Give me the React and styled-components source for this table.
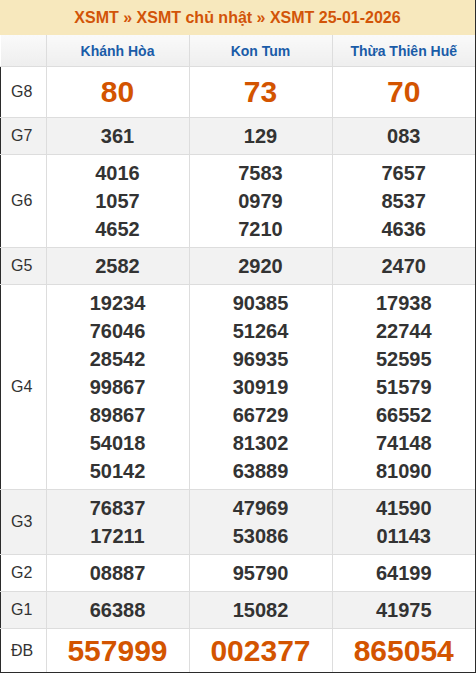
import React from "react";
import styled, { createGlobalStyle } from "styled-components";

const GlobalStyle = createGlobalStyle`
  html, body {
    margin: 0;
    padding: 0;
    background: #fff;
  }
  body {
    font-family: "Liberation Sans", Arial, sans-serif;
    color: #333;
  }
`;

const provinces = ["Khánh Hòa", "Kon Tum", "Thừa Thiên Huế"];

// prize rows, one array per province
const rows = [
  { label: "G8", big: true, values: [["80"], ["73"], ["70"]] },
  { label: "G7", values: [["361"], ["129"], ["083"]] },
  {
    label: "G6",
    values: [
      ["4016", "1057", "4652"],
      ["7583", "0979", "7210"],
      ["7657", "8537", "4636"],
    ],
  },
  { label: "G5", values: [["2582"], ["2920"], ["2470"]] },
  {
    label: "G4",
    values: [
      ["19234", "76046", "28542", "99867", "89867", "54018", "50142"],
      ["90385", "51264", "96935", "30919", "66729", "81302", "63889"],
      ["17938", "22744", "52595", "51579", "66552", "74148", "81090"],
    ],
  },
  {
    label: "G3",
    values: [
      ["76837", "17211"],
      ["47969", "53086"],
      ["41590", "01143"],
    ],
  },
  { label: "G2", values: [["08887"], ["95790"], ["64199"]] },
  { label: "G1", values: [["66388"], ["15082"], ["41975"]] },
  { label: "ĐB", big: true, special: true, values: [["557999"], ["002377"], ["865054"]] },
];

const Wrapper = styled.div`
  width: 476px;
  height: 673px;
  box-sizing: border-box;
  border-right: 1px solid #2b2b2b;
  border-bottom: 1px solid #2b2b2b;
  overflow: hidden;
`;

const Title = styled.div`
  height: 35px;
  display: flex;
  align-items: center;
  justify-content: center;
  background: #f7e8bd;
  color: #d25408;
  font-size: 16px;
  font-weight: bold;
`;

const Table = styled.table`
  width: 100%;
  border-collapse: collapse;
  table-layout: fixed;
`;

const HeadCell = styled.th`
  height: 31px;
  padding: 0;
  background: linear-gradient(#fafafa, #eeeeee);
  color: #1a5ca8;
  font-size: 14px;
  font-weight: bold;
  text-align: center;
  border-left: 1px solid #dddddd;
  border-bottom: 1px solid #dddddd;
  &:first-child {
    width: 45px;
    border-left: none;
  }
`;

const Row = styled.tr`
  background: ${(p) => (p.$shaded ? "#f2f2f2" : "#ffffff")};
`;

const Label = styled.td`
  width: 45px;
  padding: 0 0 0 10px;
  box-sizing: border-box;
  font-size: 16px;
  color: #333;
  border-left: 1px solid #2b2b2b;
  border-bottom: 1px solid #dddddd;
`;

const Cell = styled.td`
  padding: ${(p) => (p.$big ? (p.$special ? "7px 0" : "10px 0") : "4px 0")};
  text-align: center;
  vertical-align: middle;
  border-left: 1px solid #dddddd;
  border-bottom: 1px solid #dddddd;
  tr:last-child > & {
    border-bottom: none;
  }
`;

const Num = styled.div`
  font-weight: bold;
  font-size: ${(p) => (p.$big ? "30px" : "20px")};
  line-height: ${(p) => (p.$big ? "30px" : "28px")};
  color: ${(p) => (p.$big ? "#d35400" : "#333333")};
`;

export default function App() {
  return (
    <Wrapper>
      <GlobalStyle />
      <Title>XSMT » XSMT chủ nhật » XSMT 25-01-2026</Title>
      <Table>
        <thead>
          <tr>
            <HeadCell />
            {provinces.map((p) => (
              <HeadCell key={p}>{p}</HeadCell>
            ))}
          </tr>
        </thead>
        <tbody>
          {rows.map((r, i) => (
            <Row key={r.label} $shaded={i % 2 === 1}>
              <Label>{r.label}</Label>
              {r.values.map((list, j) => (
                <Cell key={j} $big={r.big} $special={r.special}>
                  {list.map((n, k) => (
                    <Num key={k} $big={r.big}>
                      {n}
                    </Num>
                  ))}
                </Cell>
              ))}
            </Row>
          ))}
        </tbody>
      </Table>
    </Wrapper>
  );
}
